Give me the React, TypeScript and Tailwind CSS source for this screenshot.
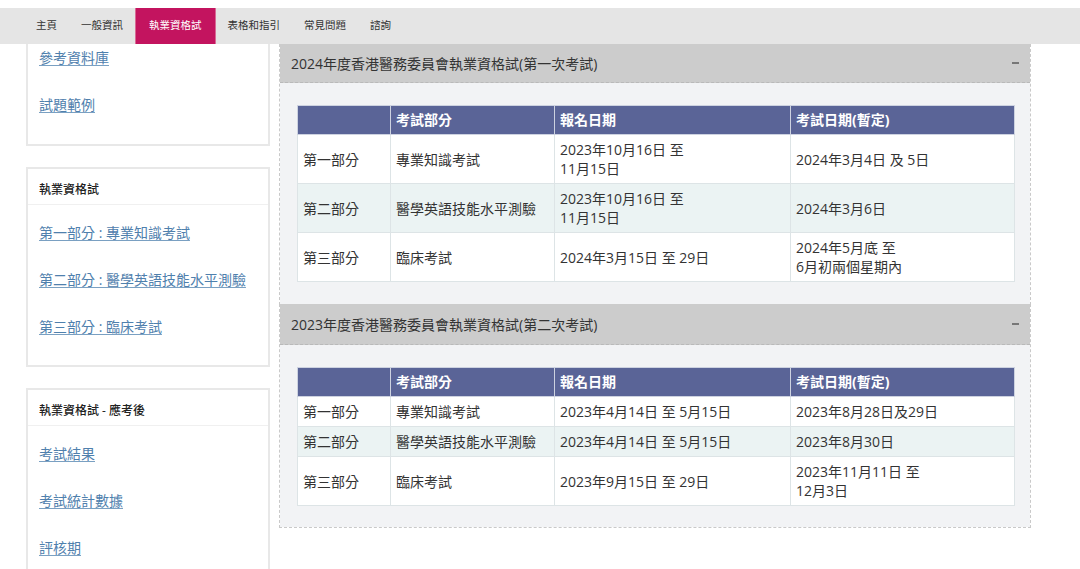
import React from "react";

const FONT = { fontFamily: '"Open Sans", "Noto Sans CJK TC", sans-serif' };

type Row = { a: string; b: string; c: React.ReactNode; d: React.ReactNode };

const table1: Row[] = [
  { a: "第一部分", b: "專業知識考試", c: <>2023年10月16日 至<br />11月15日</>, d: "2024年3月4日 及 5日" },
  { a: "第二部分", b: "醫學英語技能水平測驗", c: <>2023年10月16日 至<br />11月15日</>, d: "2024年3月6日" },
  { a: "第三部分", b: "臨床考試", c: "2024年3月15日 至 29日", d: <>2024年5月底 至<br />6月初兩個星期內</> },
];

const table2: Row[] = [
  { a: "第一部分", b: "專業知識考試", c: "2023年4月14日 至 5月15日", d: "2023年8月28日及29日" },
  { a: "第二部分", b: "醫學英語技能水平測驗", c: "2023年4月14日 至 5月15日", d: "2023年8月30日" },
  { a: "第三部分", b: "臨床考試", c: "2023年9月15日 至 29日", d: <>2023年11月11日 至<br />12月3日</> },
];

function ExamTable({ rows }: { rows: Row[] }) {
  const td = "border border-[#dde4e6] px-[5px] py-[5px] leading-[19px] align-middle";
  const th = "border border-[#cdd2e0] px-[5px] py-[5px] leading-[18px] text-left font-bold text-white";
  return (
    <table className="w-[717px] border-collapse table-fixed text-[14px] text-[#333]">
      <colgroup>
        <col className="w-[93px]" />
        <col className="w-[164px]" />
        <col className="w-[236px]" />
        <col className="w-[224px]" />
      </colgroup>
      <thead>
        <tr className="bg-[#5a6497]">
          <th className={th}></th>
          <th className={th}>考試部分</th>
          <th className={th}>報名日期</th>
          <th className={th}>考試日期(暫定)</th>
        </tr>
      </thead>
      <tbody>
        {rows.map((r, i) => (
          <tr key={i} className={i % 2 === 1 ? "bg-[#ebf3f3]" : "bg-white"}>
            <td className={td}>{r.a}</td>
            <td className={td}>{r.b}</td>
            <td className={td}>{r.c}</td>
            <td className={td}>{r.d}</td>
          </tr>
        ))}
      </tbody>
    </table>
  );
}

function Panel({ title, rows, first }: { title: string; rows: Row[]; first?: boolean }) {
  return (
    <div className="border-x border-b border-dashed border-[#c9c9c9]">
      <div className={`flex items-center justify-between bg-[#cccccc] pl-[11px] pr-[11px] border-b border-dashed border-[#b9b9b9] ${first ? "h-[39px]" : "h-[41px]"}`}>
        <span className="text-[14px] text-[#333]">{title}</span>
        <div className="w-[7px] h-[2px] bg-[#777]" />
      </div>
      <div className={`bg-[#f2f3f5] pl-[17px] pt-[22px] ${first ? "pb-[22px]" : "pb-[21px]"}`}>
        <ExamTable rows={rows} />
      </div>
    </div>
  );
}

function SideLink({ text, first }: { text: string; first?: boolean }) {
  return (
    <div className={`${first ? "pt-[3px]" : "pt-[13px]"} pb-[13px] leading-[21px]`}>
      <a className="text-[14px] text-[#4f80ad] underline decoration-[#7aa0c2] underline-offset-2 cursor-pointer">{text}</a>
    </div>
  );
}

function SideBox({ title, links }: { title: string; links: string[] }) {
  return (
    <div className="border-2 border-[#e8e8e8] bg-white mt-[21px]">
      <div className="h-[36px] pt-[6px] flex items-center px-[11px] border-b border-[#f0f0f0]">
        <span className="text-[12px] text-[#222] font-medium">{title}</span>
      </div>
      <div className="px-[11px] pt-[4px] pb-[15px]">
        {links.map((l, i) => (
          <div key={i} className="h-[47px] flex items-center">
            <a className="text-[14px] text-[#4f80ad] underline decoration-[#7aa0c2] underline-offset-2 cursor-pointer leading-[21px]">{l}</a>
          </div>
        ))}
      </div>
    </div>
  );
}

export default function App() {
  const nav = ["主頁", "一般資訊", "執業資格試", "表格和指引", "常見問題", "諮詢"];
  return (
    <div className="w-[1080px] h-[569px] overflow-hidden bg-white" style={FONT}>
      <div className="h-[8px] bg-white" />
      <div className="h-[36px] bg-[#e5e5e5] flex pl-[24px]">
        {nav.map((n, i) => (
          <div
            key={n}
            className={`px-3 flex items-center text-[10.5px] ${i === 2 ? "bg-[#c3145f] text-white border-x border-[#d86a95] px-[13px]" : "text-[#333]"}`}
          >
            {n}
          </div>
        ))}
      </div>
      <div className="flex pl-[26px]">
        <div className="w-[244px] shrink-0">
          <div className="border-x-2 border-b-2 border-[#e8e8e8] bg-white">
            <div className="px-[11px] pb-[16px]">
              <SideLink text="參考資料庫" first />
              <SideLink text="試題範例" />
            </div>
          </div>
          <SideBox title="執業資格試" links={["第一部分 : 專業知識考試", "第二部分 : 醫學英語技能水平測驗", "第三部分 : 臨床考試"]} />
          <SideBox title="執業資格試 - 應考後" links={["考試結果", "考試統計數據", "評核期"]} />
        </div>
        <div className="w-[752px] ml-[9px] shrink-0">
          <Panel title="2024年度香港醫務委員會執業資格試(第一次考試)" rows={table1} first />
          <div className="-mt-px">
            <Panel title="2023年度香港醫務委員會執業資格試(第二次考試)" rows={table2} />
          </div>
        </div>
      </div>
    </div>
  );
}
